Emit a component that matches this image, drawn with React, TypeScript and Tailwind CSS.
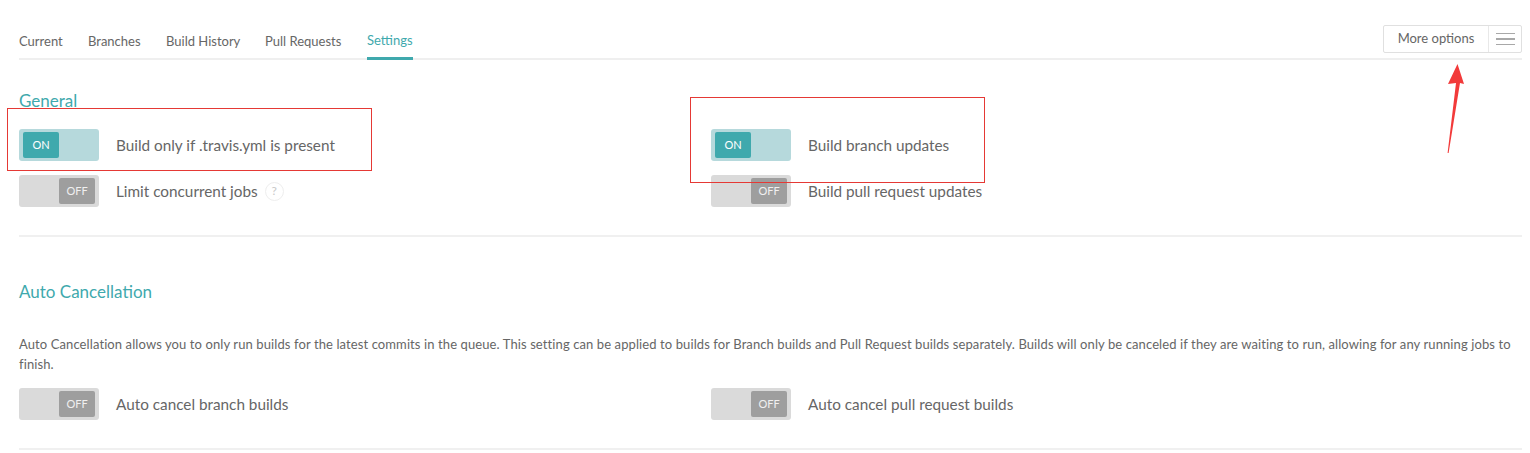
import React from "react";

function Toggle({ on }: { on: boolean }) {
  return on ? (
    <div className="flex h-[32px] w-[80px] shrink-0 items-center rounded-[3px] bg-[#b6d9dc] px-[4px]">
      <div className="flex h-[26px] w-[36px] items-center justify-center rounded-[2px] bg-[#3fa9ad] text-[11px] text-white">
        ON
      </div>
    </div>
  ) : (
    <div className="flex h-[32px] w-[80px] shrink-0 items-center justify-end rounded-[3px] bg-[#dadada] px-[4px]">
      <div className="flex h-[26px] w-[36px] items-center justify-center rounded-[2px] bg-[#9e9e9e] text-[11px] text-[#f0f0f0]">
        OFF
      </div>
    </div>
  );
}

function Setting({ on, label, help }: { on: boolean; label: string; help?: boolean }) {
  return (
    <div className="flex h-[32px] items-center">
      <Toggle on={on} />
      <span className="ml-[17px] text-[15.3px] text-[#666]">{label}</span>
      {help && (
        <span className="ml-[7px] flex h-[19px] w-[19px] items-center justify-center rounded-full border border-[#eee] text-[12px] text-[#c8c8c8]">
          ?
        </span>
      )}
    </div>
  );
}

export default function App() {
  const tabs = [
    { name: "Current", w: "w-[69px]" },
    { name: "Branches", w: "w-[78px]" },
    { name: "Build History", w: "w-[99px]" },
    { name: "Pull Requests", w: "w-[102px]" },
  ];
  return (
    <div
      className="relative h-[453px] w-[1530px] overflow-hidden bg-white"
      style={{ fontFamily: "Lato, 'Noto Sans', sans-serif" }}
    >
      <div className="ml-[19px] mr-[8px]">
        {/* header */}
        <div className="mt-[25px] flex items-end justify-between border-b-2 border-[#efefef]">
          <div className="flex items-end">
            {tabs.map((t) => (
              <div key={t.name} className={`${t.w} pb-[7px] text-[13px] leading-[20px] text-[#666]`}>
                {t.name}
              </div>
            ))}
            <div className="-mb-[2px] border-b-[3px] border-[#3fa9ad] pb-[7px] text-[13px] leading-[20px] text-[#3fa9ad]">
              Settings
            </div>
          </div>
          <div className="mb-[5px] flex h-[28px] w-[139px] items-stretch rounded-[2px] border border-[#e0e0e0]">
            <div className="flex flex-1 items-center justify-center text-[13px] text-[#666]">More options</div>
            <div className="flex w-[33px] flex-col items-center justify-center gap-[4px] border-l border-[#e8e8e8]">
              <span className="h-[1.5px] w-[19px] bg-[#a8a8a8]" />
              <span className="h-[1.5px] w-[19px] bg-[#a8a8a8]" />
              <span className="h-[1.5px] w-[19px] bg-[#a8a8a8]" />
            </div>
          </div>
        </div>

        {/* General */}
        <h2 className="mt-[29px] text-[17px] leading-[24px] text-[#3fa9ad]">General</h2>
        <div className="mt-[16px] flex">
          <div className="flex w-[692px] flex-col gap-[14px]">
            <Setting on label="Build only if .travis.yml is present" />
            <Setting on={false} label="Limit concurrent jobs" help />
          </div>
          <div className="flex flex-col gap-[14px]">
            <Setting on label="Build branch updates" />
            <Setting on={false} label="Build pull request updates" />
          </div>
        </div>
        <div className="mt-[28px] h-[2px] bg-[#f0f0f0]" />

        {/* Auto Cancellation */}
        <h2 className="mt-[43px] text-[17px] leading-[24px] text-[#3fa9ad]">Auto Cancellation</h2>
        <p className="mt-[30px] text-[13px] leading-[20px] tracking-[0.1px] text-[#666]">
          Auto Cancellation allows you to only run builds for the latest commits in the queue. This setting can be applied to builds for Branch builds and Pull Request builds separately. Builds will only be canceled if they are waiting to run, allowing for any running jobs to finish.
        </p>
        <div className="mt-[14px] flex">
          <div className="w-[692px]">
            <Setting on={false} label="Auto cancel branch builds" />
          </div>
          <Setting on={false} label="Auto cancel pull request builds" />
        </div>
        <div className="mt-[28px] h-[2px] bg-[#f0f0f0]" />
      </div>

      {/* annotations */}
      <div className="absolute left-[7px] top-[108px] h-[63px] w-[365px] border border-[#e53935]" />
      <div className="absolute left-[690px] top-[97px] h-[86px] w-[295px] border border-[#e53935]" />
      <svg className="absolute left-[1440px] top-[60px]" width="30" height="100" viewBox="1440 60 30 100">
        <polygon points="1457.5,64 1464,84 1460,83 1448.6,153 1447.6,153 1456,83 1448,84" fill="#f23a3a" />
      </svg>
    </div>
  );
}
